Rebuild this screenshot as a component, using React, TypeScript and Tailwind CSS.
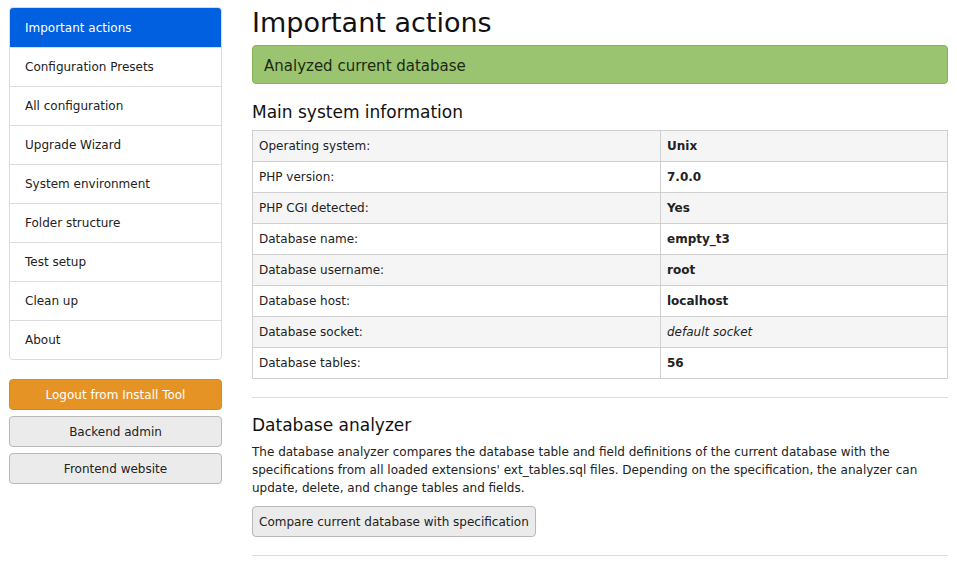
import React from 'react'

const navItems = [
	'Important actions',
	'Configuration Presets',
	'All configuration',
	'Upgrade Wizard',
	'System environment',
	'Folder structure',
	'Test setup',
	'Clean up',
	'About',
]

const rows: { label: string; value: string; italic?: boolean }[] = [
	{ label: 'Operating system:', value: 'Unix' },
	{ label: 'PHP version:', value: '7.0.0' },
	{ label: 'PHP CGI detected:', value: 'Yes' },
	{ label: 'Database name:', value: 'empty_t3' },
	{ label: 'Database username:', value: 'root' },
	{ label: 'Database host:', value: 'localhost' },
	{ label: 'Database socket:', value: 'default socket', italic: true },
	{ label: 'Database tables:', value: '56' },
]

export default function App() {
	return (
		<div
			className="flex min-h-[564px] w-[957px] bg-white text-[12px] text-[#222]"
			style={{ fontFamily: '"DejaVu Sans", Verdana, sans-serif' }}
		>
			<aside className="ml-[9px] mt-[7px] w-[213px] shrink-0">
				<nav className="overflow-hidden rounded border border-[#dcdcdc]">
					{navItems.map((item, i) => (
						<div
							key={item}
							className={
								i === 0
									? 'flex h-[39px] items-center bg-[#0060e0] px-[15px] text-white'
									: 'flex h-[39px] items-center border-t border-[#dcdcdc] px-[15px] text-[#222]'
							}
						>
							{item}
						</div>
					))}
				</nav>

				<div className="mt-[19px] flex flex-col gap-[6px]">
					<button className="h-[31px] rounded-sm border border-[#d88a20] bg-[#e69325] text-white">
						Logout from Install Tool
					</button>
					<button className="h-[31px] rounded-sm border border-[#b8b8b8] bg-[#ebebeb] text-[#222]">
						Backend admin
					</button>
					<button className="h-[31px] rounded-sm border border-[#b8b8b8] bg-[#ebebeb] text-[#222]">
						Frontend website
					</button>
				</div>
			</aside>

			<main className="ml-[30px] w-[696px]">
				<h1 className="mt-[4px] text-[27px] leading-[38px] text-[#111]">
					Important actions
				</h1>
				<div className="mt-[3px] flex h-[39px] items-center rounded-sm border border-[#82b356] bg-[#9bc471] px-[11px] pt-[3px] text-[15px] text-[#1d2a12]">
					Analyzed current database
				</div>

				<h3 className="mt-[16px] text-[17px] leading-[24px] text-[#111]">
					Main system information
				</h3>
				<table className="mt-[6px] w-full border-collapse border border-[#cfcfcf]">
					<tbody>
						{rows.map((r, i) => (
							<tr key={r.label} className={i % 2 === 0 ? 'bg-[#f5f5f5]' : 'bg-white'}>
								<td className="h-[31px] w-[408px] border border-[#cfcfcf] px-[6px]">{r.label}</td>
								<td
									className={
										r.italic
											? 'border border-[#cfcfcf] px-[6px] italic'
											: 'border border-[#cfcfcf] px-[6px] font-bold'
									}
								>
									{r.value}
								</td>
							</tr>
						))}
					</tbody>
				</table>

				<hr className="mt-[18px] border-[#dedede]" />

				<h3 className="mt-[15px] text-[17px] leading-[24px] text-[#111]">
					Database analyzer
				</h3>
				<p className="mt-[6px] leading-[18px]">
					The database analyzer compares the database table and field definitions of the current database
					with the specifications from all loaded extensions' ext_tables.sql files. Depending on the
					specification, the analyzer can update, delete, and change tables and fields.
				</p>
				<button className="mt-[9px] h-[31px] rounded-sm border border-[#b8b8b8] bg-[#ebebeb] px-[6px] text-[#222]">
					Compare current database with specification
				</button>

				<hr className="mt-[18px] border-[#dedede]" />
			</main>
		</div>
	)
}
